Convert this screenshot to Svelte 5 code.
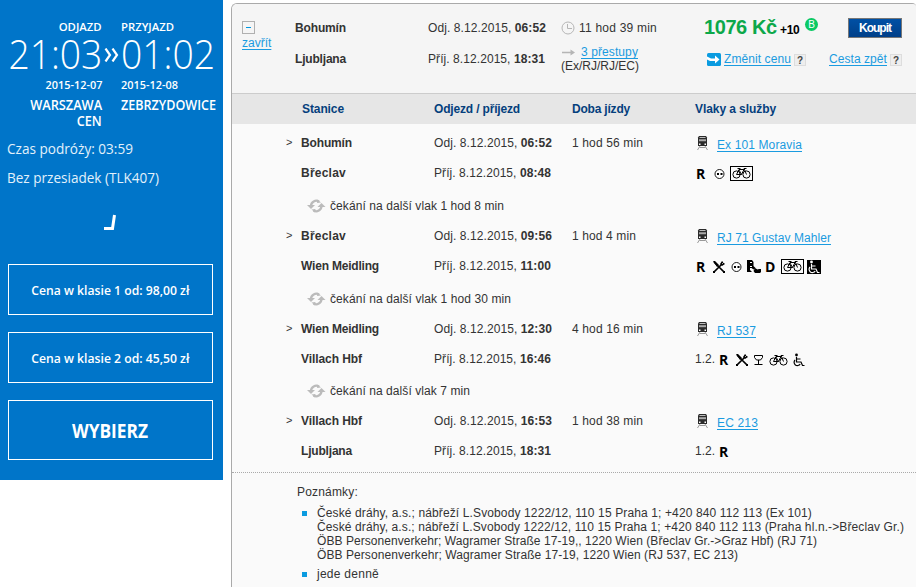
<script>
  // Spreads the letters of a label over its column measure.
  function fit(node, width) {
    const natural = node.getBoundingClientRect().width;
    const count = node.textContent.length;
    node.style.letterSpacing = `${(width - natural) / count}px`;
  }

  // Condenses a label horizontally to its measure.
  function condense(node, width) {
    const natural = node.getBoundingClientRect().width;
    node.style.transform = `scaleX(${width / natural})`;
  }

  const legs = [
    {
      from: 'Bohumín', fromW: 51, dep: '06:52', to: 'Břeclav', toW: 45, arr: '08:48',
      time: '1 hod 56 min', timeW: 71, train: 'Ex 101 Moravia', trainW: 85,
      classes: '', services: [['R', 2], ['face', 8], ['bikebox', 5]],
      wait: '1 hod 8 min', waitW: 174
    },
    {
      from: 'Břeclav', fromW: 45, dep: '09:56', to: 'Wien Meidling', toW: 78, arr: '11:00',
      time: '1 hod 4 min', timeW: 64, train: 'RJ 71 Gustav Mahler', trainW: 114,
      classes: '', services: [['R', 2], ['food', 7], ['face', 6], ['seat', 5], ['D', 5], ['bikebox', 6], ['wheelbox', 3]],
      wait: '1 hod 30 min', waitW: 181
    },
    {
      from: 'Wien Meidling', fromW: 78, dep: '12:30', to: 'Villach Hbf', toW: 61, arr: '16:46',
      time: '4 hod 16 min', timeW: 71, train: 'RJ 537', trainW: 39,
      classes: '1.2.', services: [['R', 5], ['food', 7], ['glass', 6], ['bike', 6], ['wheel', 3]],
      wait: '7 min', waitW: 140, short: true
    },
    {
      from: 'Villach Hbf', fromW: 61, dep: '16:53', to: 'Ljubljana', toW: 51, arr: '18:31',
      time: '1 hod 38 min', timeW: 71, train: 'EC 213', trainW: 41,
      classes: '1.2.', services: [['R', 5]]
    }
  ];

  const carriers = [
    ['České dráhy, a.s.; nábřeží L.Svobody 1222/12, 110 15 Praha 1; +420 840 112 113 (Ex 101)', 495],
    ['České dráhy, a.s.; nábřeží L.Svobody 1222/12, 110 15 Praha 1; +420 840 112 113 (Praha hl.n.->Břeclav Gr.)', 587],
    ['ÖBB Personenverkehr; Wagramer Straße 17-19,, 1220 Wien (Břeclav Gr.->Graz Hbf) (RJ 71)', 500],
    ['ÖBB Personenverkehr; Wagramer Straße 17-19, 1220 Wien (RJ 537, EC 213)', 421]
  ];
</script>

{#snippet bikeShape()}
  <g fill="none" stroke="#000" stroke-width="1">
    <circle cx="4.5" cy="7.5" r="3.6" /><circle cx="14.5" cy="7.5" r="3.6" />
    <path d="M4.5 7.5 7 2.5h5L9.5 7.5H4.5M7 3l2.5 4.5M14.5 7.5 12 1.5h2.5M5.5 1.5h3" />
  </g>
{/snippet}

{#snippet chairShape(color)}
  <g fill="none" stroke={color} stroke-width="1.2">
    <path d="M4.5 4v5h4.500l1.500 3.500h2M4.500 6h4" />
    <path d="M3 7a3.300 3.300 0 1 0 5.200 4" />
  </g>
  <circle cx="4.5" cy="2" r="1.4" fill={color} />
{/snippet}

{#snippet service(kind, gap)}
  <span class="svc" style:margin-left="{gap}px">
    {#if kind === 'R' || kind === 'D'}
      <b class="code">{kind}</b>
    {:else if kind === 'face'}
      <svg width="11" height="10"><circle cx="5.5" cy="5" r="4.5" fill="#fff" stroke="#000" stroke-width=".9" /><path d="M3 4h2v2H3zM6.500 4h2v2h-2z" /></svg>
    {:else if kind === 'food'}
      <svg width="12" height="12"><path d="M1 1l10 10M10 2 1 11" stroke="#000" stroke-width="1.7" /><path d="M0 0h2l4 4-2 2zM9 0l3 3-3 2-2-2zM0 10h2v2H0zM10 10h2v2h-2z" /><path d="M9 3l2.500-2.500" stroke="#fafafa" stroke-width=".7" /></svg>
    {:else if kind === 'seat'}
      <svg width="14" height="13"><path d="M0 0h5l1.500 2v4l2 2-2 1.500L4.500 8H3v2l2 2H0zM8 8l2.500 1.500L12 9h2v3l-1 1H8l-1.500-2z" /><path d="M3 2.500h2M3 6.500h2" stroke="#fff" /></svg>
    {:else if kind === 'glass'}
      <svg width="9" height="10"><path d="M.5.5h8v2l-2 2.500h-4L.5 2.500zM4.500 5v4M.5 9.500h8" fill="none" stroke="#000" /></svg>
    {:else if kind === 'bike'}
      <svg width="20" height="12">{@render bikeShape()}</svg>
    {:else if kind === 'bikebox'}
      <svg width="23" height="15"><rect x=".5" y=".5" width="22" height="14" fill="none" stroke="#000" /><g transform="translate(2 1)">{@render bikeShape()}</g></svg>
    {:else if kind === 'wheel'}
      <svg width="13" height="14">{@render chairShape('#000')}</svg>
    {:else}
      <svg width="14" height="14"><rect width="14" height="14" />{@render chairShape('#fff')}</svg>
    {/if}
  </span>
{/snippet}

{#snippet help()}<span class="help">?</span>{/snippet}

<div class="page">
  <aside>
    <div class="times">
      <div class="side right">
        <span class="label" use:condense={43}>ODJAZD</span>
        <span class="clock" use:condense={94}>21:03</span>
        <span class="label date" use:condense={57}>2015-12-07</span>
        <span class="city" use:condense={72}>WARSZAWA</span>
        <span class="city" use:condense={25}>CEN</span>
      </div>
      <svg class="chev" width="15" height="14"><path d="M1.500.5l4.500 6.500-4.500 6.500M8.500.5 13 7l-4.500 6.500" fill="none" stroke="#fff" stroke-width="2.2" /></svg>
      <div class="side">
        <span class="label" use:condense={53}>PRZYJAZD</span>
        <span class="clock" use:condense={94}>01:02</span>
        <span class="label date" use:condense={57}>2015-12-08</span>
        <span class="city" use:condense={95}>ZEBRZYDOWICE</span>
      </div>
    </div>
    <div class="info"><span use:condense={126}>Czas podróży: 03:59</span></div>
    <div class="info"><span use:condense={152}>Bez przesiadek (TLK407)</span></div>
    <svg class="tick" width="14" height="17"><path d="M1 14.500h8.500L11.500 1" fill="none" stroke="#fff" stroke-width="3" /></svg>
    <button class="price"><span use:condense={158}>Cena w klasie 1 od: 98,00 zł</span></button>
    <button class="price"><span use:condense={158}>Cena w klasie 2 od: 45,50 zł</span></button>
    <button class="choose"><span use:condense={76}>WYBIERZ</span></button>
  </aside>

  <main>
    <header>
      <div class="toggle">
        <svg width="13" height="13"><rect x=".5" y=".5" width="12" height="12" fill="#f5f5f5" stroke="#b0b0b0" /><path d="M4 6.500h5" stroke="#0097e0" /></svg>
        <a href="#close" use:fit={28}>zavřít</a>
      </div>
      <div class="cities"><b use:fit={51}>Bohumín</b><b use:fit={51}>Ljubljana</b></div>
      <div class="when">
        <span use:fit={118}>Odj. 8.12.2015, <b>06:52</b></span>
        <span use:fit={117}>Příj. 8.12.2015, <b>18:31</b></span>
      </div>
      <div class="duration">
        <div class="total">
          <svg width="14" height="14"><g fill="none" stroke="#b5b5b5"><circle cx="7" cy="7" r="6" /><path d="M6.500 3v4.500H11" /></g></svg>
          <span use:fit={78}>11 hod 39 min</span>
        </div>
        <div class="changes">
          <svg width="13" height="7"><path d="M0 3.500h9" stroke="#b5b5b5" stroke-width="1.300" /><path d="M8.500.5l4.500 3-4.500 3z" fill="#b5b5b5" /></svg>
          <a href="#changes" use:fit={57}>3 přestupy</a>
        </div>
        <span class="kinds" use:fit={78}>(Ex/RJ/RJ/EC)</span>
      </div>
      <div class="cost">
        <div class="sum">
          <b class="amount" use:fit={73}>1076 Kč</b>
          <b class="bonus" use:fit={22}>+10</b>
          <span class="badge">B</span>
        </div>
        <div class="edit">
          <svg width="14" height="13"><rect width="14" height="13" rx="1.500" fill="#0a9be0" /><path d="M0 3.500 4 5.500h4V2.500L12.500 6.500 8 10.500V8H3L0 6.500z" fill="#fff" /></svg>
          <a href="#price" use:fit={67}>Změnit cenu</a>{@render help()}
        </div>
      </div>
      <div class="buy">
        <button><span use:fit={32}>Koupit</span></button>
        <div class="back"><a href="#return" use:fit={58}>Cesta zpět</a>{@render help()}</div>
      </div>
    </header>

    <div class="grid heads">
      <b class="first" use:fit={42}>Stanice</b>
      <b use:fit={86}>Odjezd / příjezd</b>
      <b use:fit={58}>Doba jízdy</b>
      <b use:fit={81}>Vlaky a služby</b>
    </div>

    <section class="legs">
      {#each legs as leg}
        <div class="grid row">
          <div class="station"><i>&gt;</i><b use:fit={leg.fromW}>{leg.from}</b></div>
          <div><span use:fit={118}>Odj. 8.12.2015, <b>{leg.dep}</b></span></div>
          <div><span use:fit={leg.timeW}>{leg.time}</span></div>
          <div class="train">
            <svg width="11" height="15">
              <path d="M2 0h7l1 1.500V10H1V1.500z" fill="#2b2b2b" /><path d="M2.500 1.500h6" stroke="#bbb" />
              <path d="M2 3.200h7v2H2z" fill="#aaa" /><path d="M2 7.500h1.500V9H2zM7.500 7.500H9V9H7.500z" fill="#fff" />
              <path d="M3 10 .5 14M8 10l2.500 4M2.500 11.500h6" stroke="#999" fill="none" />
            </svg>
            <a href="#train" use:fit={leg.trainW}>{leg.train}</a>
          </div>
        </div>
        <div class="grid row">
          <div class="station"><i></i><b use:fit={leg.toW}>{leg.to}</b></div>
          <div><span use:fit={117}>Příj. 8.12.2015, <b>{leg.arr}</b></span></div>
          <div></div>
          <div class="services">
            {#if leg.classes}<span use:fit={20}>{leg.classes}</span>{/if}
            {#each leg.services as [kind, gap]}{@render service(kind, gap)}{/each}
          </div>
        </div>
        {#if leg.wait}
          <div class="wait" class:short={leg.short}>
            <svg width="20" height="14">
              <g fill="none" stroke="#bbb" stroke-width="2.300"><path d="M4 7a5.300 5.300 0 0 1 8-4.500M14.500 7a5.300 5.300 0 0 1-8 4.500" /></g>
              <path d="M0 6h8L4 10zM10.500 8l4-4L18.500 8zM10.500.5l3.500 3-4 .5zM8 13.500l-3.500-3 4-.5z" fill="#bbb" />
            </svg>
            <span use:fit={leg.waitW}>čekání na další vlak {leg.wait}</span>
          </div>
        {/if}
      {/each}
    </section>

    <section class="notes">
      <span use:fit={61}>Poznámky:</span>
      <ul>
        <li>{#each carriers as [line, width]}<div><span use:fit={width}>{line}</span></div>{/each}</li>
        <li><span use:fit={62}>jede denně</span></li>
      </ul>
    </section>
  </main>
</div>

<style>
  :global(body) { background: #fff; overflow: hidden; }
  .page {
    display: flex; align-items: flex-start; width: 916px; height: 587px; overflow: hidden;
    font: 12px/14px "Liberation Sans", Arial, sans-serif; color: #333;
  }
  span, b, a { white-space: nowrap; }
  svg { display: block; flex: none; }
  a { color: #1a9be0; text-decoration: underline; text-underline-offset: 2px; text-decoration-thickness: 1px; text-decoration-skip-ink: none; }
  button { box-sizing: border-box; padding: 0; cursor: pointer; font: inherit; }

  aside {
    box-sizing: border-box; width: 223px; height: 480px; padding: 20px 10px 0 7px;
    display: flex; flex-direction: column; background: #0075c9; color: #fff;
    font-family: "Open Sans", "Noto Sans", sans-serif;
  }
  aside span { display: inline-block; transform-origin: left; }
  .times { display: flex; height: 117px; }
  .side { display: flex; flex-direction: column; align-items: flex-start; width: 95px; }
  .side.right { align-items: flex-end; }
  .side.right span { transform-origin: right; }
  .chev { margin: 28px 2px 0 2px; }
  .label { font-size: 11px; line-height: 14px; font-weight: 600; }
  .clock { font-size: 41px; line-height: 42px; font-weight: 300; margin-top: -2px; }
  .date { margin-top: 4px; }
  .city { font-size: 13.5px; line-height: 16px; font-weight: 600; }
  .date + .city { margin-top: 5px; }
  .info { height: 29px; line-height: 22px; font-size: 15px; color: #e3f1fb; }
  .tick { margin: 19px 0 33px 96px; }
  .price, .choose { width: 205px; margin-left: 1px; border: 1px solid #fff; background: none; color: #fff; }
  .price { height: 51px; margin-bottom: 17px; font-size: 13px; font-weight: 600; }
  .choose { height: 60px; padding-top: 2px; font-size: 20px; font-weight: 700; }
  .price span, .choose span { transform-origin: center; }
  .choose span { margin-left: -1px; }

  main {
    box-sizing: border-box; flex: none; width: 685px; height: 600px; margin: 3px 0 0 8px;
    border: 1px solid #aaa; border-right: 0; border-radius: 6px 4px 0 0; background: #fafafa; overflow: hidden;
  }
  header { display: flex; height: 89px; background: #f5f5f5; border-bottom: 1px solid #ccc; }
  .toggle { width: 53px; padding: 17px 0 0 10px; }
  .toggle a { display: block; width: 28px; margin-top: 2px; }
  .cities, .when { display: flex; flex-direction: column; align-items: flex-start; gap: 17px; padding-top: 17px; }
  .cities, .when { width: 133px; }
  .duration { width: 143px; padding-top: 17px; }
  .total, .changes { display: flex; align-items: center; gap: 4px; height: 14px; }
  .changes { margin-top: 10px; gap: 6px; padding-left: 1px; }
  .kinds { display: inline-block; }
  .cost { width: 125px; padding-top: 12px; }
  .sum { display: flex; align-items: baseline; height: 22px; line-height: 22px; color: #000; }
  .amount { width: 76px; font-size: 20px; color: #0ca84a; }
  .bonus { width: 23px; }
  .badge {
    align-self: flex-start; width: 13px; height: 13px; border-radius: 50%; background: #0bc964; color: #fff;
    font-size: 10px; line-height: 13px; text-align: center; margin: 2px 0 0 2px;
  }
  .edit, .back { display: flex; align-items: center; height: 14px; }
  .edit { margin-top: 14px; gap: 3px; margin-left: 3px; }
  .help {
    box-sizing: border-box; width: 12px; height: 12px; border: 1px solid #ddd; background: #eee; color: #444;
    font-size: 10px; line-height: 11px; font-weight: 700; text-align: center; margin-top: 2px;
  }
  .buy { display: flex; flex-direction: column; width: 73px; padding-top: 14px; }
  .buy button {
    align-self: flex-end; width: 54px; height: 20px; border: 1px solid #777; color: #fff; font-weight: 700;
    background: linear-gradient(#0050a5, #003f88);
  }
  .back { margin-top: 14px; justify-content: space-between; }

  .grid { display: grid; grid-template-columns: 202px 138px 123px 221px; align-items: center; }
  .heads { height: 30px; background: #e6e6e6; color: #053f7d; }
  .grid b { justify-self: start; }
  .first { margin-left: 70px; }
  .legs { box-sizing: border-box; height: 349px; padding-top: 4px; border-bottom: 1px dotted #aaa; }
  .row { height: 30px; }
  .station { display: flex; }
  i { box-sizing: border-box; width: 69px; padding-left: 54px; font-style: normal; font-size: 11px; line-height: 13px; }
  .train, .services { display: flex; align-items: center; }
  .train svg { margin: 0 9px 0 2px; }
  .train a { margin-top: 4px; }
  .services { height: 16px; }
  .svc { display: flex; align-items: center; margin-top: 1px; }
  .code { width: 9px; font: 700 14px/14px "Open Sans", "Noto Sans", sans-serif; color: #000; margin-left: -1px; margin-right: 1px; }
  .wait { display: flex; align-items: center; gap: 3px; height: 33px; padding: 2px 0 0 75px; box-sizing: border-box; }
  .short { height: 32px; padding-top: 1px; }

  .notes { padding: 12px 0 0 65px; }
  ul { margin: 7px 0 0; padding: 0; list-style: none; }
  li { display: block; padding-left: 20px; margin-bottom: 5px; background: linear-gradient(#0a9be0, #0a9be0) 5px 5px / 5px 5px no-repeat; }
</style>
